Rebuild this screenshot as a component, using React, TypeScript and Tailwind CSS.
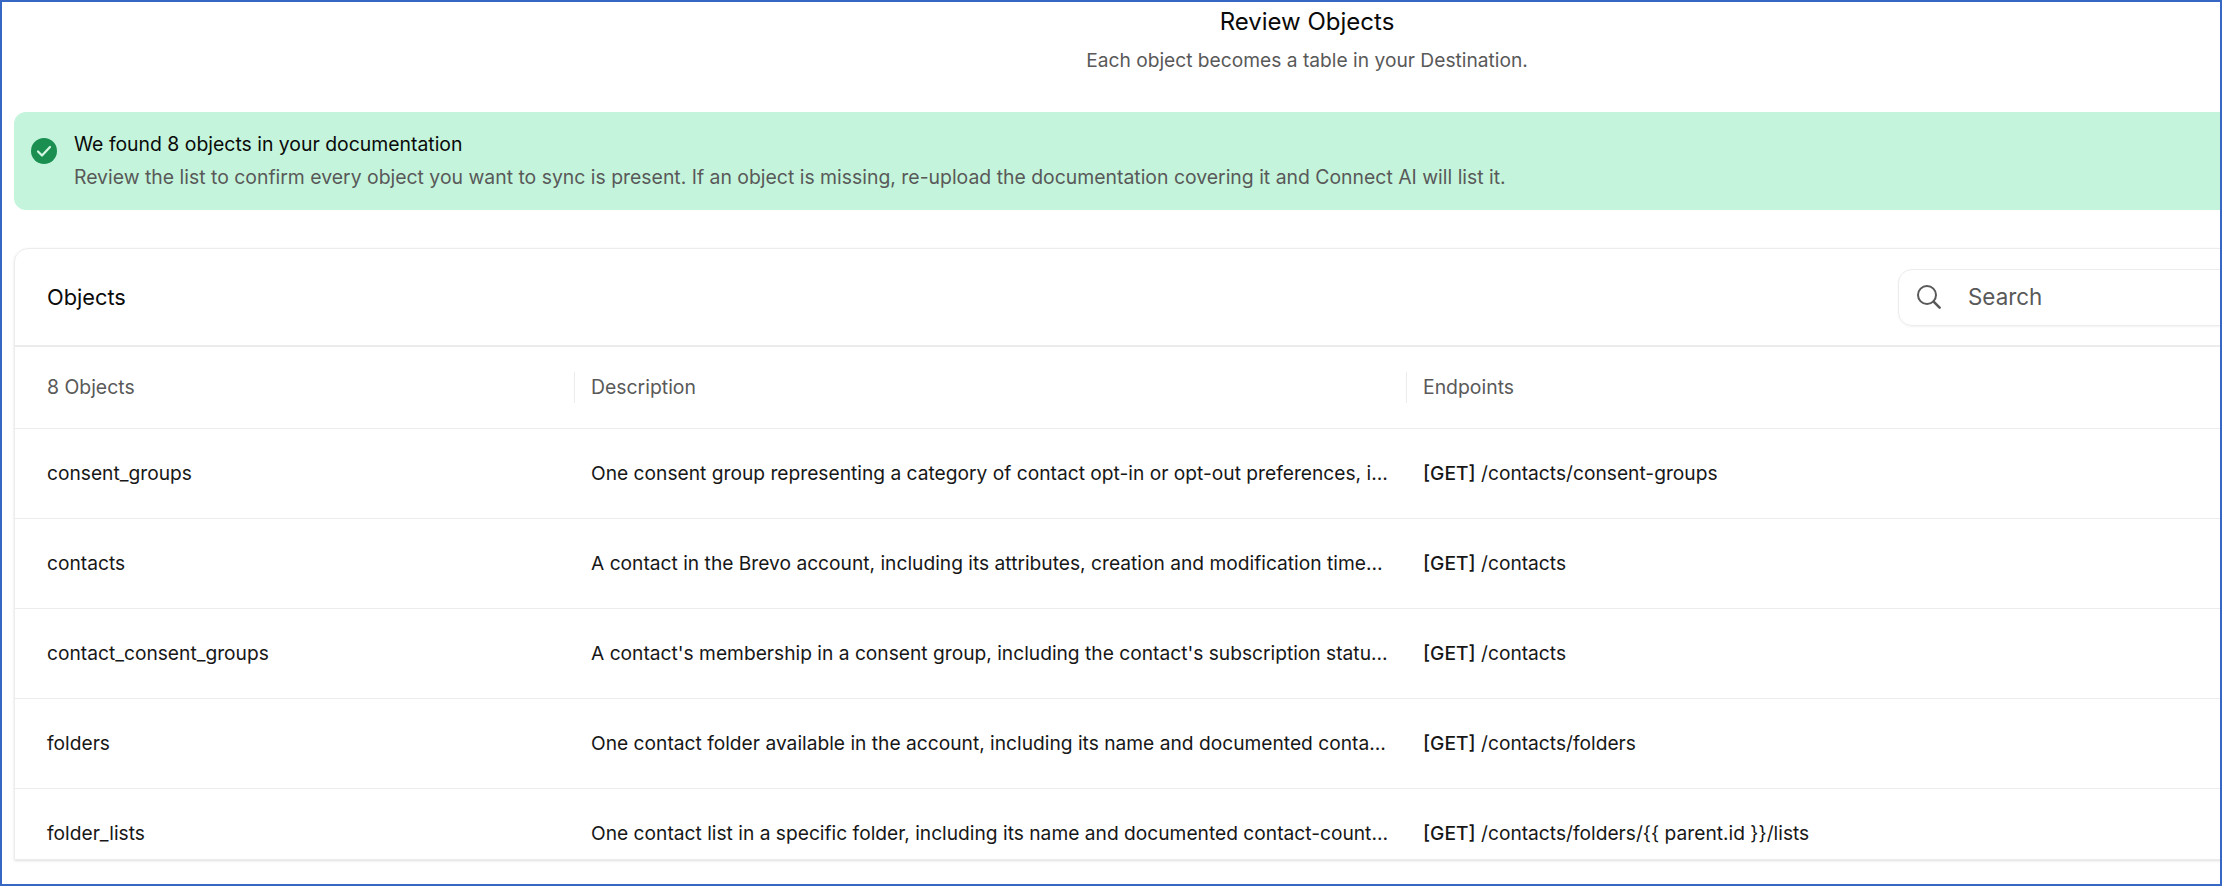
const rows = [
  {
    name: "consent_groups",
    description: "One consent group representing a category of contact opt-in or opt-out preferences, including its name and the documented settings returned by the API for each group in the account.",
    method: "[GET]",
    path: "/contacts/consent-groups",
  },
  {
    name: "contacts",
    description: "A contact in the Brevo account, including its attributes, creation and modification timestamps, list memberships and the documented status fields returned for each contact record.",
    method: "[GET]",
    path: "/contacts",
  },
  {
    name: "contact_consent_groups",
    description: "A contact's membership in a consent group, including the contact's subscription status and the documented identifiers that link each contact with the group.",
    method: "[GET]",
    path: "/contacts",
  },
  {
    name: "folders",
    description: "One contact folder available in the account, including its name and documented contact-count fields returned for the folder by the API in each response.",
    method: "[GET]",
    path: "/contacts/folders",
  },
  {
    name: "folder_lists",
    description: "One contact list in a specific folder, including its name and documented contact-count fields as well as the identifier of the parent folder in each response.",
    method: "[GET]",
    path: "/contacts/folders/{{ parent.id }}/lists",
  },
];

function CheckBadge() {
  return (
    <svg width="26" height="26" viewBox="0 0 26 26" className="mt-[10px] shrink-0">
      <circle cx="13" cy="13" r="13" fill="#1a8f50" />
      <path d="M7 13.5l4 4 8-8.5" fill="none" stroke="#d6f7e4" strokeWidth="2.2" strokeLinecap="round" strokeLinejoin="round" />
    </svg>
  );
}

function SearchIcon() {
  return (
    <svg width="24" height="24" viewBox="0 0 24 24" fill="none" stroke="#595959" strokeWidth="2" strokeLinecap="round" className="shrink-0">
      <circle cx="10" cy="10" r="9" />
      <path d="M16.6 16.6l6 6" strokeWidth="2.6" />
    </svg>
  );
}

export default function App() {
  return (
    <div className="h-[886px] w-[2222px] overflow-hidden border-2 border-[#3767c5] bg-white font-['Inter',sans-serif] text-[#111111]">
      <div className="ml-[12px] w-[2586px]">
        <div className="pt-[3px] text-center">
          <h1 className="text-[24px] leading-[34px] font-normal text-[#0a0a0a]">Review Objects</h1>
          <p className="mt-[7px] text-[19.2px] leading-[28px] text-[#595959]">Each object becomes a table in your Destination.</p>
        </div>

        <div className="mt-[38px] flex h-[98px] gap-[17px] rounded-[12px] bg-[#c4f5dc] pt-[16px] pl-[17px]">
          <CheckBadge />
          <div>
            <div className="text-[19.4px] leading-[33px] text-[#0a0a0a]">We found 8 objects in your documentation</div>
            <div className="text-[19.4px] leading-[33px] text-[#595959]">
              Review the list to confirm every object you want to sync is present. If an object is missing, re-upload the documentation covering it and Connect AI will list it.
            </div>
          </div>
        </div>

        <div className="mt-[38px] h-[612px] overflow-hidden rounded-t-[14px] border border-[#ececec] shadow-sm">
          <div className="flex h-[98px] items-center justify-between border-b-2 border-[#ececec] pr-[32px] pl-[32px]">
            <h2 className="text-[21.8px] font-normal text-[#0a0a0a]">Objects</h2>
            <div className="flex h-[57px] w-[669px] items-center gap-[27px] rounded-[14px] border border-[#ececec] pl-[18px] shadow-xs">
              <SearchIcon />
              <span className="text-[22.4px] text-[#595959]">Search</span>
            </div>
          </div>

          <div className="grid h-[82px] grid-cols-[559px_832px_1fr] items-center border-b border-[#ececec] text-[19.4px] text-[#595959]">
            <div className="pl-[32px]">8 Objects</div>
            <div className="flex h-[31px] items-center border-l border-[#ececec] pl-[16px]">Description</div>
            <div className="flex h-[31px] items-center border-l border-[#ececec] pl-[16px]">Endpoints</div>
          </div>

          {rows.map((row) => (
            <div key={row.name} className="grid h-[90px] grid-cols-[559px_832px_1fr] items-center border-b border-[#ececec] text-[19.2px] text-[#171717]">
              <div className="pl-[32px]">{row.name}</div>
              <div className="truncate pr-[16px] pl-[17px]">{row.description}</div>
              <div className="pl-[17px]">
                <span className="font-medium">{row.method}</span> {row.path}
              </div>
            </div>
          ))}
        </div>
      </div>
    </div>
  );
}
